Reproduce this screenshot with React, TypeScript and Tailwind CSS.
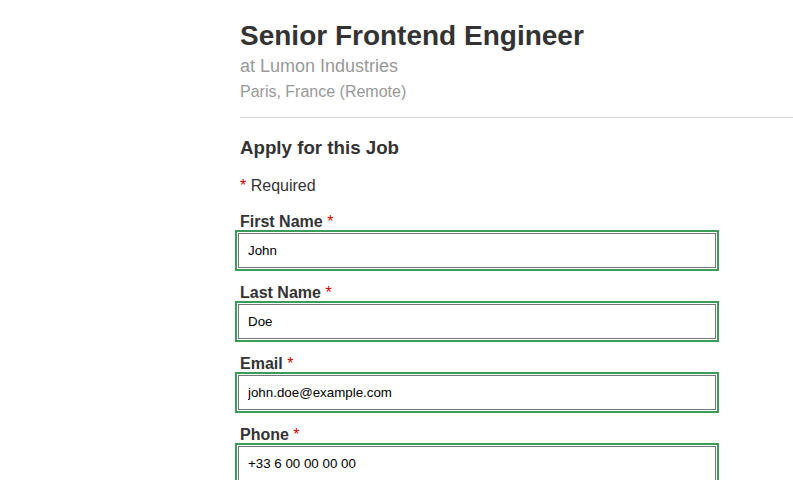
const fields = [
  { id: "first_name", label: "First Name", value: "John", type: "text" },
  { id: "last_name", label: "Last Name", value: "Doe", type: "text" },
  { id: "email", label: "Email", value: "john.doe@example.com", type: "email" },
  { id: "phone", label: "Phone", value: "+33 6 00 00 00 00", type: "tel" },
];

export default function App() {
  return (
    <main className="min-h-screen bg-white font-['Liberation_Sans',Arial,sans-serif] text-[#333]">
      <div className="ml-[238px] w-[555px] pl-[2px]">
        <header className="pt-[20px]">
          <h1 className="text-[28px] font-bold leading-[32px]">Senior Frontend Engineer</h1>
          <p className="mt-[2px] text-[18px] leading-[24px] text-[#999]">at Lumon Industries</p>
          <p className="mt-[2px] text-[16px] leading-[24px] text-[#999]">Paris, France (Remote)</p>
        </header>
        <hr className="mt-[13px] border-t border-[#ddd]" />
        <section>
          <h3 className="mt-[18px] text-[18.72px] font-bold leading-[24px]">Apply for this Job</h3>
          <p className="mt-[14px] text-[16px] leading-[24px]">
            <span className="text-[#c00]">*</span> Required
          </p>
          <form className="-ml-[2px]">
            {fields.map((f) => (
              <div key={f.id} className="mt-[13px] first:mt-[12px]">
                <label htmlFor={f.id} className="block pl-[2px] text-[16px] font-bold leading-[24px]">
                  {f.label} <span className="font-normal text-[#c00]">*</span>
                </label>
                <input
                  id={f.id}
                  type={f.type}
                  defaultValue={f.value}
                  className="-mt-px block h-[35px] w-[478px] border border-[#767676] bg-white px-[9px] text-[13.333px] text-black outline-2 outline-offset-1 outline-[#3b9c5a] outline-solid"
                />
              </div>
            ))}
          </form>
        </section>
      </div>
    </main>
  );
}
